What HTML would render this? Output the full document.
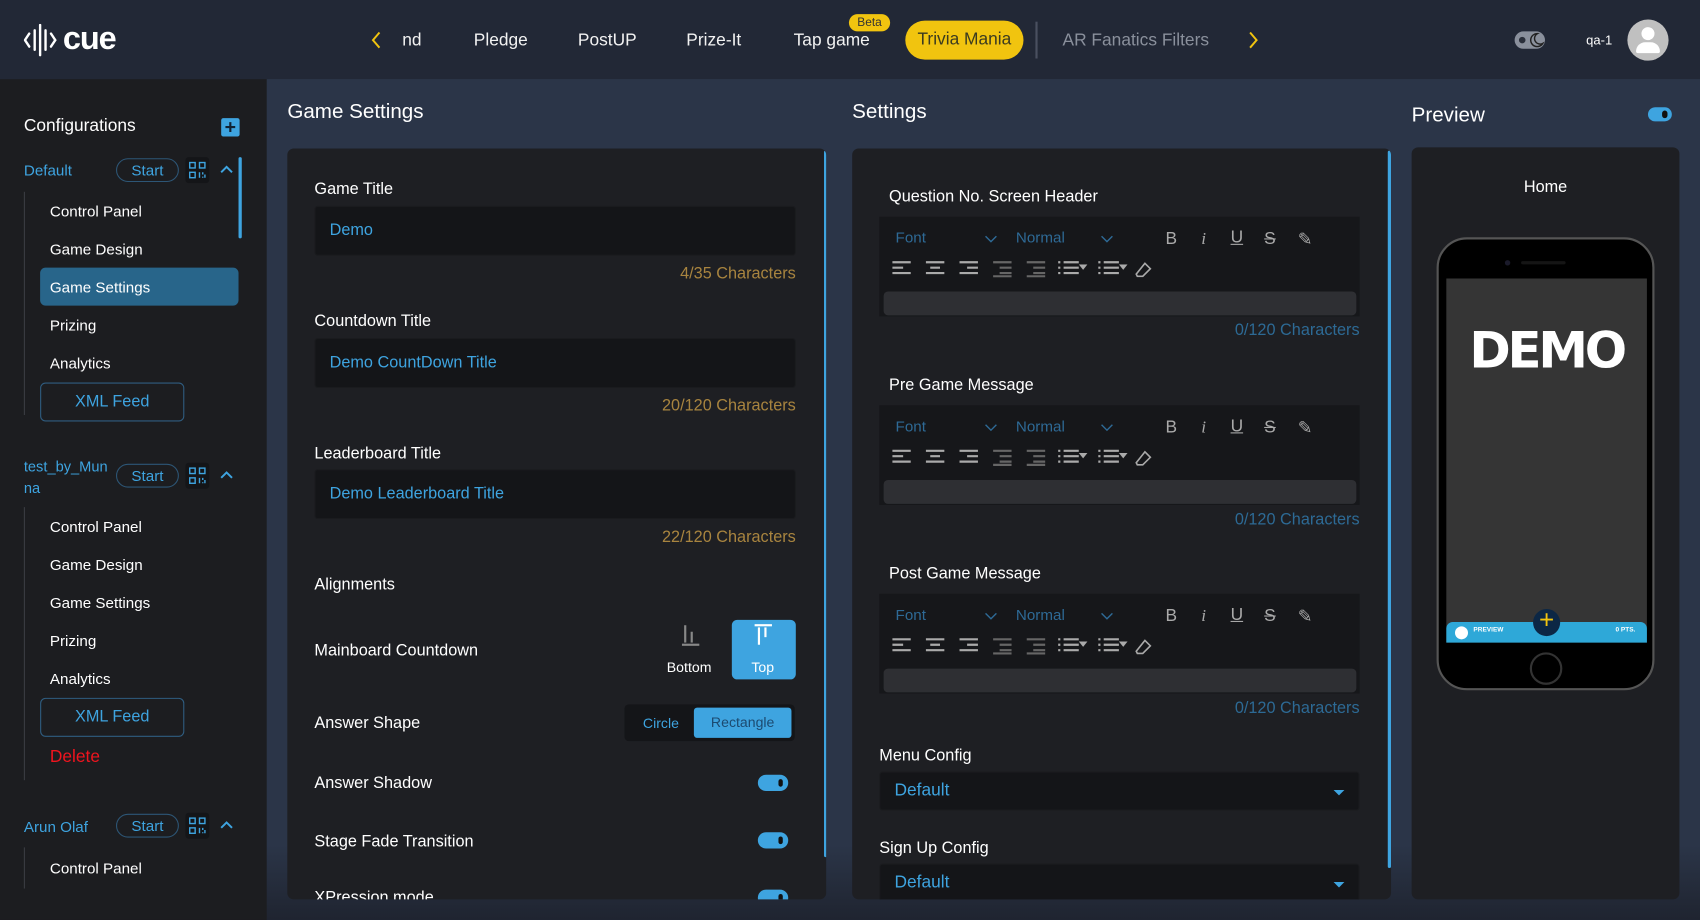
<!DOCTYPE html>
<html><head><meta charset="utf-8">
<style>
*{box-sizing:border-box;margin:0;padding:0}
html,body{width:1700px;height:920px;overflow:hidden;background:#2a3345}
body{font-family:"Liberation Sans",sans-serif;color:#fff}
#w{position:absolute;left:0;top:0;width:1568px;height:849px;transform:scale(1.0842,1.0836);transform-origin:0 0;background:linear-gradient(#2b3548 0,#2b3548 780px,#1f2430 849px)}
.a{position:absolute;white-space:nowrap}
.top{position:absolute;left:0;top:0;width:1568px;height:73px;background:#222836}
.nav{font-size:16px;color:#f2f2f2;top:29px}
.side{position:absolute;left:0;top:73px;width:246px;height:776px;background:#1c1d20}
.si{font-size:14px;color:#fff;left:46px}
.blue{color:#3ea4e0}
.pill{position:absolute;border:1px solid #2d5676;border-radius:12px;color:#3ea4e0;font-size:14px;text-align:center;line-height:20px;width:58px;height:22px}
.qr{position:absolute;width:22px;height:24px;background:#141518;border-radius:3px}
.xml{position:absolute;left:37px;width:133px;height:36px;border:1px solid #2f5d80;border-radius:5px;color:#3ea4e0;font-size:15px;text-align:center;line-height:34px}
.panel{position:absolute;background:#1e1f23;border-radius:6px}
.h{font-size:19px;color:#fff}
.lbl{font-size:15px;color:#fff}
.inp{position:absolute;background:#141518;border:1px solid #1a1b1e;border-radius:3px;color:#3ea4e0;font-size:15px;padding-left:13px}
.cnt{font-size:15px;color:#a8843f;text-align:right}
.tog{position:absolute;width:28px;height:15px;border-radius:8px;background:#3ea4e0}
.tog:after{content:"";position:absolute;right:5px;top:4px;width:4px;height:7px;border-radius:2px;background:#111}
.ed{position:absolute;left:25px;width:443px;height:92px;background:#16171a}
.ed .t{position:absolute;font-size:14px;color:#2e6a96}
.ed .ta{position:absolute;left:4px;top:69px;width:436px;height:22px;background:#2e2f33;border-radius:4px}
.ic{position:absolute;font-size:16px;color:#aaa}
.ch{font-size:15px;color:#2d6a95;text-align:right;right:29px}
.sel{position:absolute;left:25px;width:443px;height:36px;background:#141518;border:1px solid #1a1b1e;border-radius:3px;color:#3ea4e0;font-size:16px;padding-left:13px;line-height:34px}
.sel:after{content:"";position:absolute;right:13px;top:16px;border-left:5px solid transparent;border-right:5px solid transparent;border-top:5px solid #3ea4e0}
.tb{position:absolute;left:12px;top:40px}
</style></head><body><div id="w">
<div class="top">
  <svg class="a" style="left:22px;top:22px" width="34" height="30" viewBox="0 0 34 30" stroke="#fff" stroke-width="2.2" fill="none" stroke-linecap="round"><path d="M5 9 L1 15 L5 21"/><path d="M10 6 V24"/><path d="M15 1 V29"/><path d="M20 6 V24"/><path d="M25 9 L29 15 L25 21"/></svg>
  <div class="a" style="left:58px;top:19px;font-size:30px;font-weight:bold;letter-spacing:-1px">cue</div>
  <svg class="a" style="left:341px;top:29px" width="12" height="16" viewBox="0 0 12 16"><path d="M9 1 L3 8 L9 15" stroke="#f1c40f" stroke-width="1.8" fill="none"/></svg>
  <div class="a nav" style="left:371px">nd</div>
  <div class="a nav" style="left:437px">Pledge</div>
  <div class="a nav" style="left:533px">PostUP</div>
  <div class="a nav" style="left:633px">Prize-It</div>
  <div class="a nav" style="left:732px">Tap game</div>
  <div class="a" style="left:783px;top:13px;width:38px;height:16px;border-radius:8px;background:#f1c40f;color:#333;font-size:11px;text-align:center;line-height:16px">Beta</div>
  <div class="a" style="left:835px;top:19px;width:109px;height:36px;border-radius:18px;background:#f1c40f;color:#3a3a20;font-size:16px;text-align:center;line-height:36px">Trivia Mania</div>
  <div class="a" style="left:955px;top:20px;width:2px;height:34px;background:#4a5060"></div>
  <div class="a nav" style="left:980px;color:#8a909c">AR Fanatics Filters</div>
  <svg class="a" style="left:1150px;top:29px" width="12" height="16" viewBox="0 0 12 16"><path d="M3 1 L9 8 L3 15" stroke="#f1c40f" stroke-width="1.8" fill="none"/></svg>
  <div class="a" style="left:1397px;top:29px;width:28px;height:16px;border-radius:8px;background:#8a909c"></div>
  <div class="a" style="left:1401px;top:34px;width:6px;height:6px;border-radius:3px;background:#2a2f3a"></div>
  <svg class="a" style="left:1409px;top:29px" width="16" height="16" viewBox="0 0 16 16"><path d="M9 2 A6 6 0 1 0 14 11 A5 5 0 0 1 9 2Z" stroke="#222" stroke-width="1.3" fill="none"/></svg>
  <div class="a" style="left:1463px;top:30px;font-size:12px">qa-1</div>
  <div class="a" style="left:1501px;top:18px;width:38px;height:38px;border-radius:19px;background:#c0c0c0;overflow:hidden">
    <div class="a" style="left:13px;top:7px;width:12px;height:12px;border-radius:6px;background:#fff"></div>
    <div class="a" style="left:8px;top:21px;width:22px;height:10px;border-radius:10px 10px 2px 2px;background:#fff"></div>
  </div>
</div>
<div class="side">
  <div class="a" style="left:22px;top:35px;font-size:16px">Configurations</div>
  <div class="a" style="left:204px;top:36px;width:17px;height:17px;background:#3ea4e0;border-radius:2px;color:#123;font-size:18px;line-height:17px;text-align:center;font-weight:bold">+</div>
  <div class="a" style="left:220px;top:72px;width:3px;height:75px;background:#3ea4e0;border-radius:2px"></div>
</div>
<div class="a blue" style="left:22px;top:149px;font-size:14px">Default</div>
<div class="pill" style="left:107px;top:146px">Start</div>
<div class="qr" style="left:171px;top:145px"></div>
<svg class="a" style="left:174px;top:149px" width="16" height="16" viewBox="0 0 16 16" stroke="#3ea4e0" stroke-width="1.3" fill="none"><rect x="1" y="1" width="5" height="5"/><rect x="10" y="1" width="5" height="5"/><rect x="1" y="10" width="5" height="5"/><path d="M10 10 V15 M13 10 V12 M13 14 V15 M15 12 V15"/></svg>
<svg class="a" style="left:203px;top:152px" width="12" height="8" viewBox="0 0 12 8"><path d="M1 7 L6 2 L11 7" stroke="#3ea4e0" stroke-width="1.8" fill="none"/></svg>
<div class="a" style="left:22px;top:177px;width:1px;height:206px;background:#3a3c42"></div>
<div class="a si" style="top:187px">Control Panel</div>
<div class="a si" style="top:222px">Game Design</div>
<div class="a" style="left:37px;top:247px;width:183px;height:35px;background:#28658a;border-radius:5px"></div>
<div class="a si" style="top:257px">Game Settings</div>
<div class="a si" style="top:292px">Prizing</div>
<div class="a si" style="top:327px">Analytics</div>
<div class="xml" style="top:353px">XML Feed</div>

<div class="a blue" style="left:22px;top:421px;font-size:13.5px;line-height:20px;white-space:normal;width:80px">test_by_Mun<br>na</div>
<div class="pill" style="left:107px;top:428px">Start</div>
<div class="qr" style="left:171px;top:427px"></div>
<svg class="a" style="left:174px;top:431px" width="16" height="16" viewBox="0 0 16 16" stroke="#3ea4e0" stroke-width="1.3" fill="none"><rect x="1" y="1" width="5" height="5"/><rect x="10" y="1" width="5" height="5"/><rect x="1" y="10" width="5" height="5"/><path d="M10 10 V15 M13 10 V12 M13 14 V15 M15 12 V15"/></svg>
<svg class="a" style="left:203px;top:434px" width="12" height="8" viewBox="0 0 12 8"><path d="M1 7 L6 2 L11 7" stroke="#3ea4e0" stroke-width="1.8" fill="none"/></svg>
<div class="a" style="left:22px;top:468px;width:1px;height:252px;background:#3a3c42"></div>
<div class="a si" style="top:478px">Control Panel</div>
<div class="a si" style="top:513px">Game Design</div>
<div class="a si" style="top:548px">Game Settings</div>
<div class="a si" style="top:583px">Prizing</div>
<div class="a si" style="top:618px">Analytics</div>
<div class="xml" style="top:644px">XML Feed</div>
<div class="a" style="left:46px;top:690px;font-size:16px;color:#f0141e">Delete</div>

<div class="a blue" style="left:22px;top:755px;font-size:14px">Arun Olaf</div>
<div class="pill" style="left:107px;top:751px">Start</div>
<div class="qr" style="left:171px;top:750px"></div>
<svg class="a" style="left:174px;top:754px" width="16" height="16" viewBox="0 0 16 16" stroke="#3ea4e0" stroke-width="1.3" fill="none"><rect x="1" y="1" width="5" height="5"/><rect x="10" y="1" width="5" height="5"/><rect x="1" y="10" width="5" height="5"/><path d="M10 10 V15 M13 10 V12 M13 14 V15 M15 12 V15"/></svg>
<svg class="a" style="left:203px;top:757px" width="12" height="8" viewBox="0 0 12 8"><path d="M1 7 L6 2 L11 7" stroke="#3ea4e0" stroke-width="1.8" fill="none"/></svg>
<div class="a" style="left:22px;top:782px;width:1px;height:38px;background:#3a3c42"></div>
<div class="a si" style="top:793px">Control Panel</div>

<div class="a h" style="left:265px;top:93px">Game Settings</div>
<div class="panel" style="left:265px;top:137px;width:497px;height:693px;overflow:hidden">
  <div class="a" style="left:495px;top:2px;width:3px;height:652px;background:#3ea4e0;border-radius:2px"></div>
  <div class="a lbl" style="left:25px;top:29px">Game Title</div>
  <div class="inp" style="left:25px;top:53px;width:444px;height:46px;line-height:44px">Demo</div>
  <div class="a cnt" style="right:28px;top:107px">4/35 Characters</div>
  <div class="a lbl" style="left:25px;top:151px">Countdown Title</div>
  <div class="inp" style="left:25px;top:175px;width:444px;height:46px;line-height:44px">Demo CountDown Title</div>
  <div class="a cnt" style="right:28px;top:229px">20/120 Characters</div>
  <div class="a lbl" style="left:25px;top:273px">Leaderboard Title</div>
  <div class="inp" style="left:25px;top:296px;width:444px;height:46px;line-height:44px">Demo Leaderboard Title</div>
  <div class="a cnt" style="right:28px;top:350px">22/120 Characters</div>
  <div class="a lbl" style="left:25px;top:394px">Alignments</div>
  <div class="a lbl" style="left:25px;top:455px">Mainboard Countdown</div>
  <svg class="a" style="left:363px;top:438px" width="18" height="22" viewBox="0 0 18 22" fill="#888"><rect x="3" y="2" width="2" height="16"/><rect x="9" y="8" width="2" height="10"/><rect x="1" y="19" width="16" height="2"/></svg>
  <div class="a" style="left:350px;top:471px;font-size:13px">Bottom</div>
  <div class="a" style="left:410px;top:435px;width:59px;height:55px;background:#3ea4e0;border-radius:5px"></div>
  <svg class="a" style="left:430px;top:438px" width="18" height="22" viewBox="0 0 18 22" fill="#fff"><rect x="1" y="1" width="16" height="2"/><rect x="4" y="4" width="2" height="16"/><rect x="10" y="4" width="2" height="9"/></svg>
  <div class="a" style="left:428px;top:471px;font-size:13px">Top</div>
  <div class="a lbl" style="left:25px;top:522px">Answer Shape</div>
  <div class="a" style="left:311px;top:513px;width:157px;height:34px;background:#141518;border-radius:4px"></div>
  <div class="a" style="left:328px;top:523px;font-size:13px;color:#3ea4e0">Circle</div>
  <div class="a" style="left:375px;top:516px;width:90px;height:28px;background:#3ea4e0;border-radius:3px;font-size:13px;color:#1c4a70;text-align:center;line-height:28px">Rectangle</div>
  <div class="a lbl" style="left:25px;top:577px">Answer Shadow</div>
  <div class="tog" style="left:434px;top:578px"></div>
  <div class="a lbl" style="left:25px;top:631px">Stage Fade Transition</div>
  <div class="tog" style="left:434px;top:631px"></div>
  <div class="a lbl" style="left:25px;top:683px">XPression mode</div>
  <div class="tog" style="left:434px;top:684px"></div>
</div>

<div class="a h" style="left:786px;top:93px">Settings</div>
<div class="panel" style="left:786px;top:137px;width:497px;height:693px;overflow:hidden">
  <div class="a" style="left:494px;top:2px;width:3px;height:662px;background:#3ea4e0;border-radius:2px"></div>
  <div class="a lbl" style="left:34px;top:36px">Question No. Screen Header</div>
  <div class="ed" style="top:63px">
    <div class="t" style="left:15px;top:11px">Font</div><svg class="a" style="left:97px;top:17px" width="12" height="8"><path d="M1 1 L6 6 L11 1" stroke="#2e6a96" stroke-width="1.3" fill="none"/></svg>
    <div class="t" style="left:126px;top:11px">Normal</div><svg class="a" style="left:204px;top:17px" width="12" height="8"><path d="M1 1 L6 6 L11 1" stroke="#2e6a96" stroke-width="1.3" fill="none"/></svg>
    <div class="ic" style="left:264px;top:12px">B</div><div class="ic" style="left:297px;top:12px;font-style:italic;font-family:'Liberation Serif',serif">i</div><div class="ic" style="left:324px;top:11px;text-decoration:underline">U</div><div class="ic" style="left:355px;top:12px;text-decoration:line-through">S</div><div class="ic" style="left:386px;top:11px">✎</div>
    <svg class="tb" width="260" height="16" viewBox="0 0 260 16" stroke="#aaa" stroke-width="2"><path d="M0 2H17M0 7H10M0 12H17"/><path d="M31 2H48M35 7H44M31 12H48"/><path d="M62 2H79M69 7H79M62 12H79"/><g stroke="#666"><path d="M93 2H110M99 7H110M99 12H110M93 15H110"/><path d="M124 2H141M130 7H141M130 12H141M124 15H141"/></g><path d="M158 2H172M158 7H172M158 12H172M153 2h2M153 7h2M153 12h2"/><path d="M195 2H209M195 7H209M195 12H209M190 2h2M190 7h2M190 12h2"/><path d="M225 13L233 3L238 8L231 15H226Z" fill="none" stroke-width="1.5"/></svg>
    <svg class="a" style="left:184px;top:44px" width="8" height="6"><path d="M0 0H8L4 5Z" fill="#aaa"/></svg><svg class="a" style="left:221px;top:44px" width="8" height="6"><path d="M0 0H8L4 5Z" fill="#aaa"/></svg>
    <div class="ta"></div>
  </div>
  <div class="a ch" style="top:159px">0/120 Characters</div>
  <div class="a lbl" style="left:34px;top:210px">Pre Game Message</div>
  <div class="ed" style="top:237px">
    <div class="t" style="left:15px;top:11px">Font</div><svg class="a" style="left:97px;top:17px" width="12" height="8"><path d="M1 1 L6 6 L11 1" stroke="#2e6a96" stroke-width="1.3" fill="none"/></svg>
    <div class="t" style="left:126px;top:11px">Normal</div><svg class="a" style="left:204px;top:17px" width="12" height="8"><path d="M1 1 L6 6 L11 1" stroke="#2e6a96" stroke-width="1.3" fill="none"/></svg>
    <div class="ic" style="left:264px;top:12px">B</div><div class="ic" style="left:297px;top:12px;font-style:italic;font-family:'Liberation Serif',serif">i</div><div class="ic" style="left:324px;top:11px;text-decoration:underline">U</div><div class="ic" style="left:355px;top:12px;text-decoration:line-through">S</div><div class="ic" style="left:386px;top:11px">✎</div>
    <svg class="tb" width="260" height="16" viewBox="0 0 260 16" stroke="#aaa" stroke-width="2"><path d="M0 2H17M0 7H10M0 12H17"/><path d="M31 2H48M35 7H44M31 12H48"/><path d="M62 2H79M69 7H79M62 12H79"/><g stroke="#666"><path d="M93 2H110M99 7H110M99 12H110M93 15H110"/><path d="M124 2H141M130 7H141M130 12H141M124 15H141"/></g><path d="M158 2H172M158 7H172M158 12H172M153 2h2M153 7h2M153 12h2"/><path d="M195 2H209M195 7H209M195 12H209M190 2h2M190 7h2M190 12h2"/><path d="M225 13L233 3L238 8L231 15H226Z" fill="none" stroke-width="1.5"/></svg>
    <svg class="a" style="left:184px;top:44px" width="8" height="6"><path d="M0 0H8L4 5Z" fill="#aaa"/></svg><svg class="a" style="left:221px;top:44px" width="8" height="6"><path d="M0 0H8L4 5Z" fill="#aaa"/></svg>
    <div class="ta"></div>
  </div>
  <div class="a ch" style="top:334px">0/120 Characters</div>
  <div class="a lbl" style="left:34px;top:384px">Post Game Message</div>
  <div class="ed" style="top:411px">
    <div class="t" style="left:15px;top:11px">Font</div><svg class="a" style="left:97px;top:17px" width="12" height="8"><path d="M1 1 L6 6 L11 1" stroke="#2e6a96" stroke-width="1.3" fill="none"/></svg>
    <div class="t" style="left:126px;top:11px">Normal</div><svg class="a" style="left:204px;top:17px" width="12" height="8"><path d="M1 1 L6 6 L11 1" stroke="#2e6a96" stroke-width="1.3" fill="none"/></svg>
    <div class="ic" style="left:264px;top:12px">B</div><div class="ic" style="left:297px;top:12px;font-style:italic;font-family:'Liberation Serif',serif">i</div><div class="ic" style="left:324px;top:11px;text-decoration:underline">U</div><div class="ic" style="left:355px;top:12px;text-decoration:line-through">S</div><div class="ic" style="left:386px;top:11px">✎</div>
    <svg class="tb" width="260" height="16" viewBox="0 0 260 16" stroke="#aaa" stroke-width="2"><path d="M0 2H17M0 7H10M0 12H17"/><path d="M31 2H48M35 7H44M31 12H48"/><path d="M62 2H79M69 7H79M62 12H79"/><g stroke="#666"><path d="M93 2H110M99 7H110M99 12H110M93 15H110"/><path d="M124 2H141M130 7H141M130 12H141M124 15H141"/></g><path d="M158 2H172M158 7H172M158 12H172M153 2h2M153 7h2M153 12h2"/><path d="M195 2H209M195 7H209M195 12H209M190 2h2M190 7h2M190 12h2"/><path d="M225 13L233 3L238 8L231 15H226Z" fill="none" stroke-width="1.5"/></svg>
    <svg class="a" style="left:184px;top:44px" width="8" height="6"><path d="M0 0H8L4 5Z" fill="#aaa"/></svg><svg class="a" style="left:221px;top:44px" width="8" height="6"><path d="M0 0H8L4 5Z" fill="#aaa"/></svg>
    <div class="ta"></div>
  </div>
  <div class="a ch" style="top:508px">0/120 Characters</div>
  <div class="a lbl" style="left:25px;top:552px">Menu Config</div>
  <div class="sel" style="top:575px">Default</div>
  <div class="a lbl" style="left:25px;top:637px">Sign Up Config</div>
  <div class="sel" style="top:660px">Default</div>
</div>

<div class="a h" style="left:1302px;top:96px">Preview</div>
<div class="a" style="left:1520px;top:99px;width:22px;height:13px;border-radius:7px;background:#3ea4e0"></div>
<div class="a" style="left:1533px;top:102px;width:5px;height:7px;border-radius:3px;background:#111"></div>
<div class="panel" style="left:1302px;top:136px;width:247px;height:694px">
  <div class="a" style="left:0;width:247px;top:28px;text-align:center;font-size:15px">Home</div>
  <div class="a" style="left:23px;top:83px;width:201px;height:418px;border-radius:28px;background:#000;border:2px solid #555"></div>
  <div class="a" style="left:86px;top:104px;width:5px;height:5px;border-radius:3px;background:#1a1a2a"></div>
  <div class="a" style="left:101px;top:105px;width:41px;height:3px;border-radius:2px;background:#151515"></div>
  <div class="a" style="left:32px;top:121px;width:185px;height:336px;background:#353535"></div>
  <div class="a" style="left:32px;top:160px;width:185px;text-align:center;font-size:46px;font-weight:900;letter-spacing:-3px;font-family:'DejaVu Sans',sans-serif">DEMO</div>
  <div class="a" style="left:32px;top:438px;width:185px;height:19px;background:#2ea8d8;border-radius:6px 6px 0 0"></div>
  <div class="a" style="left:40px;top:442px;width:12px;height:12px;border-radius:6px;background:#fff"></div>
  <div class="a" style="left:57px;top:443px;font-size:6px;font-weight:bold">PREVIEW</div>
  <div class="a" style="left:188px;top:443px;font-size:6px;font-weight:bold">0 PTS.</div>
  <div class="a" style="left:112px;top:426px;width:25px;height:25px;border-radius:13px;background:#0c2745"></div>
  <div class="a" style="left:112px;top:423px;width:25px;text-align:center;font-size:24px;color:#f1c40f;line-height:28px">+</div>
  <div class="a" style="left:109px;top:466px;width:30px;height:30px;border-radius:15px;border:2px solid #333;background:#000"></div>
</div>
</div></body></html>
